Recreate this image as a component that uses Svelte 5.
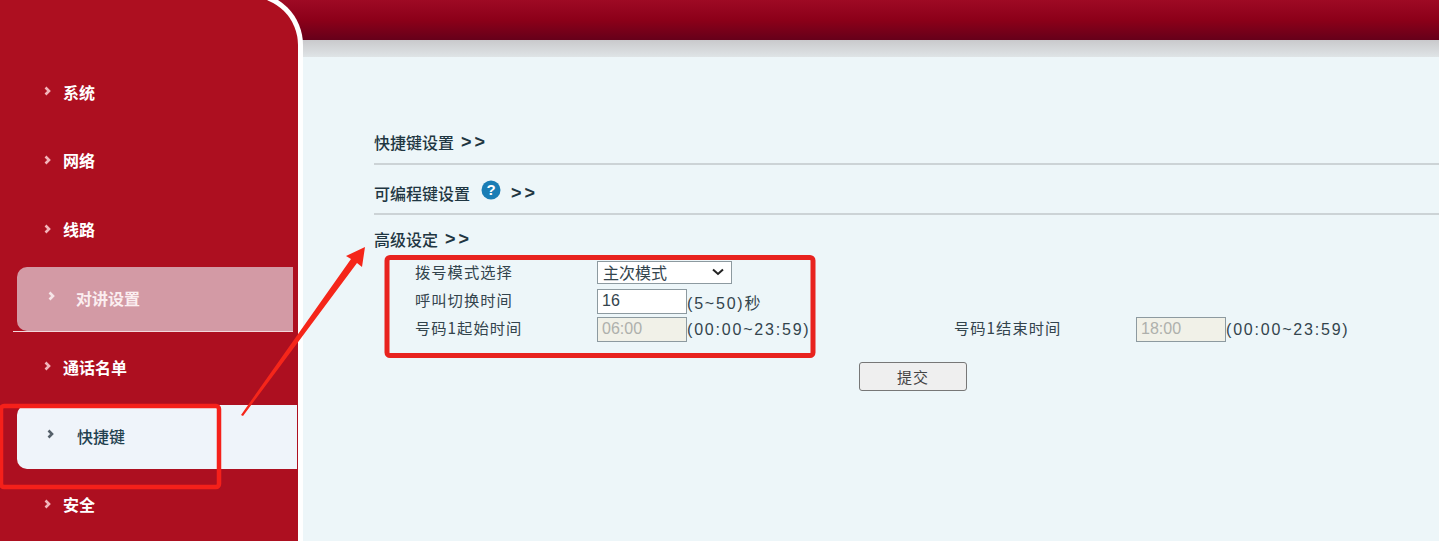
<script>
  const nav = [
    { label: "系统" },
    { label: "网络" },
    { label: "线路" },
    { label: "对讲设置", state: "hover" },
    { label: "通话名单" },
    { label: "快捷键", state: "active" },
    { label: "安全" }
  ];
</script>

<div class="page">
  <aside class="sidebar">
    <ul>
      {#each nav as item}
        <li class={item.state}>
          <svg class="chev" width="7" height="10" viewBox="0 0 7 10"><path d="M1.5 1.5 L5 5 L1.5 8.5" fill="none" stroke="currentColor" stroke-width="2.6" /></svg>
          <span>{item.label}</span>
        </li>
      {/each}
    </ul>
  </aside>

  <div class="right">
    <div class="topbar"></div>
    <div class="shade"></div>
    <main>
      <h3 class="first">快捷键设置 <b>&gt;&gt;</b></h3>
      <hr />
      <h3>
        可编程键设置
        <svg class="help" width="20" height="20" viewBox="0 0 20 20">
          <circle cx="10" cy="10" r="9.5" fill="#1a7db5" />
          <text x="10" y="15" text-anchor="middle" class="q">?</text>
        </svg>
        <b>&gt;&gt;</b>
      </h3>
      <hr />
      <h3 class="third">高级设定 <b>&gt;&gt;</b></h3>

      <div class="form">
        <label for="mode">拨号模式选择</label>
        <div class="wide">
          <span class="select-wrap">
            <select id="mode"><option>主次模式</option></select>
            <svg class="caret" width="12" height="8" viewBox="0 0 12 8"><path d="M1 1.5 L6 6 L11 1.5" fill="none" stroke="#222" stroke-width="2" /></svg>
          </span>
        </div>

        <label for="switch">呼叫切换时间</label>
        <div class="wide">
          <input id="switch" value="16" /><span class="range">(5~50)秒</span>
        </div>

        <label for="start">号码1起始时间</label>
        <div><input id="start" value="06:00" disabled /><span class="range">(00:00~23:59)</span></div>
        <label for="end">号码1结束时间</label>
        <div><input id="end" value="18:00" disabled /><span class="range">(00:00~23:59)</span></div>
      </div>

      <div class="actions"><button>提交</button></div>
    </main>
  </div>

  <!-- hand drawn annotations on top of the screenshot -->
  <svg class="marks" width="1439" height="541" viewBox="0 0 1439 541">
    <rect x="1" y="406" width="218" height="81" rx="3" fill="none" stroke="#f5201a" stroke-width="4.5" />
    <rect x="387" y="257.5" width="426" height="98" rx="3" fill="none" stroke="#e8231f" stroke-width="5" />
    <path d="M241 415 L351 259 L346 256 L365 247 L362 267 L357 263 L243 416 Z" fill="#f5261a" />
  </svg>
</div>

<style>
  :global(body) {
    margin: 0;
    background: #edf6f9;
  }

  .page {
    position: relative;
    display: flex;
    width: 1439px;
    height: 541px;
    overflow: hidden;
    font-family: "Liberation Sans", "Noto Sans CJK SC", sans-serif;
    background: #edf6f9;
  }

  .sidebar {
    flex: 0 0 298px;
    box-sizing: border-box;
    height: 560px;
    margin: -3px -60px 0 0;
    padding-top: 63.6px;
    background: #ad0f20;
    border-top-right-radius: 48px;
    box-shadow: 0 0 0 5px #fff;
    z-index: 1;
  }

  ul {
    margin: 0;
    padding: 0;
    list-style: none;
  }

  li {
    display: flex;
    align-items: center;
    height: 64px;
    margin: 0 5px 4.8px 17px;
    padding-left: 27px;
    color: #fff;
    font-family: "Noto Sans CJK SC", sans-serif;
    font-size: 16px;
    font-weight: 700;
  }

  li span {
    margin-top: -2px;
  }

  li .chev {
    margin-right: 12px;
    margin-top: -3px;
    color: #f2b5bb;
  }

  li.hover {
    position: relative;
    padding-left: 31px;
    background: #d39aa5;
    border-radius: 10px 0 0 10px;
    color: #fbeef0;
  }

  li.hover::after {
    content: "";
    position: absolute;
    left: -4px;
    right: 0;
    bottom: -1px;
    height: 1px;
    background: #f3d7db;
  }

  li.hover .chev {
    margin-right: 21px;
    margin-top: -6px;
    color: #f5e5e8;
  }

  li.active {
    padding-left: 30px;
    margin-right: 1px;
    background: #eff4fa;
    border-radius: 10px 0 0 10px;
    color: #22404f;
    font-weight: 500;
  }

  li.active .chev {
    margin-right: 23px;
    margin-top: -6px;
    color: #55606a;
  }

  .right {
    flex: 1;
    min-width: 0;
  }

  .topbar {
    height: 40px;
    background: linear-gradient(#9e0a24, #8c0019 50%, #66001a);
  }

  .shade {
    height: 17px;
    background: linear-gradient(#c9c9cc, #dfe4e6);
  }

  main {
    box-sizing: border-box;
    width: 1078px;
    margin-left: 136px;
    color: #1f3642;
  }

  h3 {
    margin: 0;
    font-family: "Noto Sans CJK SC", sans-serif;
    font-size: 16px;
    font-weight: 500;
    line-height: 24px;
    padding: 16px 0 8px;
    display: flex;
    align-items: center;
    gap: 5px;
  }

  h3.first {
    padding: 73px 0 9px;
  }

  h3.third {
    padding: 12px 0 0;
  }

  h3 b {
    font-family: "Liberation Sans", sans-serif;
    font-size: 18px;
    letter-spacing: 3px;
    margin-left: 2px;
  }

  .help {
    margin: -6px 3px 0 6px;
  }

  .q {
    fill: #fff;
    font-family: "Liberation Sans", sans-serif;
    font-size: 15px;
    font-weight: 700;
  }

  hr {
    margin: 0;
    border: 0;
    height: 2px;
    background: #ccd3d6;
  }

  .form {
    display: grid;
    grid-template-columns: 182px 357px 182px 1fr;
    grid-auto-rows: 28px;
    align-items: center;
    margin-top: 8px;
    padding-left: 41px;
    color: #33444d;
    font-family: "Noto Sans CJK SC", sans-serif;
    font-size: 15.3px;
    letter-spacing: 1px;
  }

  .form label {
    margin-bottom: 4px;
  }

  .wide {
    grid-column: 2 / 5;
  }

  .form > div {
    display: flex;
    align-items: center;
  }

  .select-wrap {
    position: relative;
    display: block;
    box-sizing: border-box;
    width: 135px;
    height: 23px;
    margin-top: -1px;
    overflow: hidden;
    background: #fff;
    border: 1px solid #8d9aa0;
  }

  select {
    appearance: none;
    display: block;
    width: 100%;
    height: 27px;
    margin-top: -4px;
    padding: 0 0 0 5px;
    background: transparent;
    border: 0;
    border-radius: 0;
    color: #33444d;
    font-family: "Noto Sans CJK SC", sans-serif;
    font-size: 16px;
  }

  .caret {
    position: absolute;
    top: 6px;
    right: 7px;
    pointer-events: none;
  }

  input {
    box-sizing: border-box;
    width: 90px;
    height: 25px;
    padding: 0 4px;
    background: #fff;
    border: 1px solid #8d9aa0;
    color: #33444d;
    font-family: "Liberation Sans", sans-serif;
    font-size: 16px;
  }

  input:disabled {
    background: #f1f1e8;
    color: #aeb0ac;
  }

  .range {
    padding-top: 1px;
    font-family: "Liberation Sans", "Noto Sans CJK SC", sans-serif;
    font-size: 16px;
    letter-spacing: 1.8px;
    white-space: nowrap;
  }

  .actions {
    display: flex;
    justify-content: center;
    margin-top: 19px;
  }

  button {
    width: 108px;
    height: 29px;
    padding: 0;
    background: #efefef;
    border: 1px solid #777;
    border-radius: 3px;
    color: #444;
    font-family: "Noto Sans CJK SC", sans-serif;
    font-size: 15px;
    letter-spacing: 1px;
  }

  .marks {
    position: absolute;
    top: 0;
    left: 0;
    z-index: 2;
    pointer-events: none;
  }
</style>
